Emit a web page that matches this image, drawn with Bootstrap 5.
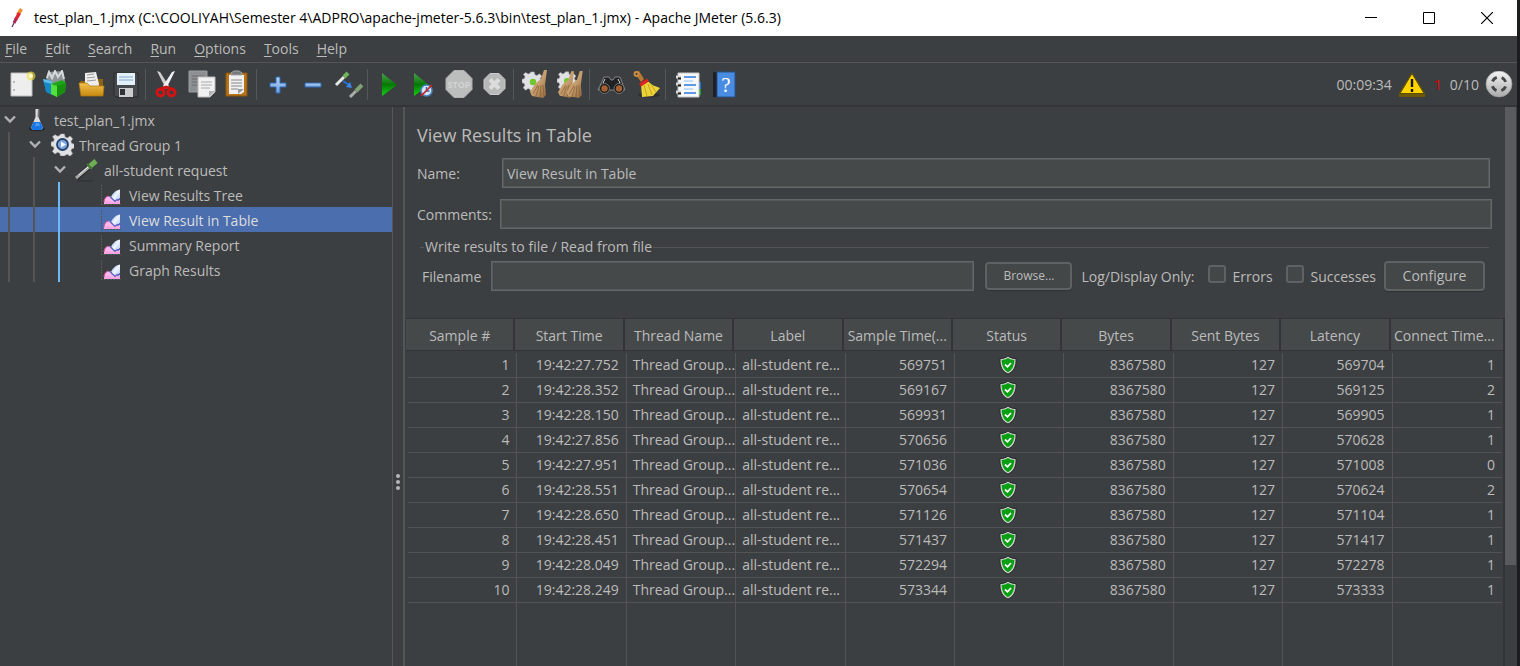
<!DOCTYPE html>
<html lang="en">
<head>
<meta charset="utf-8">
<meta name="viewport" content="width=device-width, initial-scale=1">
<title>Apache JMeter (5.6.3)</title>
<link href="https://cdn.jsdelivr.net/npm/bootstrap@5.3.0/dist/css/bootstrap.min.css" rel="stylesheet">
<style>
  body { font-family: "Open Sans", sans-serif; font-size: 14px; line-height: 20px; color: #bbb; background: #1b1c1e; overflow: hidden; }
  svg { display: block; flex: none; }
  .app { background: #3c3f41; margin-right: 3px; }
  .titlebar { height: 36px; background: #fff; color: #000; padding-left: 6px; }
  .win-btn { width: 58px; height: 36px; border: 0; background: none; padding: 0 22px; color: #000; }
  .menubar { height: 27px; border-bottom: 1px solid #555; padding-left: 5px; gap: 18px; }
  .menubar a { color: #bbb; text-decoration: none; }
  .menubar u { text-underline-offset: 2px; }
  .toolbar { height: 44px; border-bottom: 2px solid #323437; padding-left: 4px; }
  .tool { width: 35px; height: 34px; border: 0; background: none; padding: 3px; }
  .tool-sep { width: 6px; height: 31px; border-left: 1px solid #55585a; margin-left: 1px; margin-right: -1px; }
  .status { gap: 6px; padding: 2px 4px 0 0; }
  .count-err { color: #e80000; padding: 0 2px; }
  .tree { width: 392px; flex: none; }
  .tree-row { height: 25px; padding: 2px 0 0; border: 0; background: none; color: #bbb; width: 100%; text-align: left; }
  .tree-row.selected { background: #4b6eaf; color: #ddd; }
  .guide { width: 25px; height: 25px; margin-top: -2px; background: linear-gradient(#555, #555) 8px 0 / 2px 100% no-repeat; }
  .guide-on { background-image: linear-gradient(#6cb8fb, #6cb8fb); }
  .twisty { width: 24px; padding: 0 0 4px 4px; }
  .node-icon { width: 30px; padding-bottom: 2px; }
  .splitter { width: 13px; flex: none; border-left: 1px solid #555; border-right: 2px solid #555; gap: 2px; margin-right: 1px; padding-top: 190px; }
  .splitter i { width: 4px; height: 4px; border-radius: 50%; background: #b4b6b8; }
  .form-area { padding: 15px 13px 0 11px; }
  .panel-title { font-size: 18px; line-height: 26px; margin: 0 0 10px; font-weight: 400; color: #bbb; }
  .form-area label, .form-area .log-lbl { padding-top: 1px; }
  .field { height: 30px; min-width: 0; background: #45494a; color: #bbb; border: 1px solid #646667; box-shadow: inset 0 0 0 1px #55595a; padding: 0 4px; outline: 0; }
  .lbl-name { width: 85px; }
  .lbl-comments { width: 83px; }
  .name-row { padding-right: 2px; margin-bottom: 11px; }
  .file-box { margin: 8px 3px 0; padding: 0; }
  .file-box legend { font-size: 14px; line-height: 20px; gap: 1px; margin: 0; }
  .file-box legend::before, .file-box legend::after { content: ""; height: 1px; background: #555; width: 4px; }
  .file-box legend::after { flex: 1; }
  .file-row { padding: 4px 4px 0 2px; }
  .filename-lbl { width: 69px; }
  .push { height: 30px; border: 2px solid #5e6263; border-radius: 4px; background: #434748; color: #bbb; padding: 0; box-shadow: 0 1px 1px #2f3234; }
  .push-browse { width: 87px; height: 28px; font-size: 12px; margin: 0 9px 0 11px; }
  .push-config { width: 101px; }
  .gap-end { margin-right: 13px; }
  .tick { appearance: none; width: 18px; height: 18px; border: 2px solid #5e6263; border-radius: 3px; background: #434748; margin: 0 7px 4px 0; }
  .results-wrap { margin-top: 27px; padding: 0 1px 0 2px; border-top: 1px solid #323437; border-right: 2px solid #323437;
    background: linear-gradient(#323437, #323437) 0 31px / 100% 1px no-repeat, linear-gradient(#45494a, #45494a) 0 0 / 100% 31px no-repeat; }
  .results { width: 100%; height: 100%; table-layout: fixed; border-collapse: separate; border-spacing: 0; }
  .results th { height: 34px; padding: 0 6px 1px 0; font-weight: 400; text-align: center; white-space: nowrap;
    background: linear-gradient(#323437, #323437) right 2px top 0 / 2px 31px no-repeat; }
  .results th:last-child { background: none; }
  .results td { height: 25px; padding: 0 7px 1px 5px; border-right: 1px solid #515355; border-bottom: 1px solid #515355; white-space: nowrap; overflow: hidden; text-align: right; }
  .results td:last-child { border-right: 0; }
  .results td.txt { text-align: left; padding: 0 0 1px 6px; }
  .results td svg { margin: 0 auto; }
  .results .filler td { height: auto; border-bottom: 0; }
  .scroll-track { width: 12px; flex: none; }
  .scroll-thumb { height: 82%; background: #595b5d; width: 11px; }
</style>
</head>
<body class="vh-100">
<svg width="0" height="0" class="position-absolute" aria-hidden="true">
  <defs>
    <linearGradient id="gGreen" x1="0" y1="0" x2="0" y2="1"><stop offset="0" stop-color="#4aa04a"/><stop offset=".5" stop-color="#067806"/><stop offset="1" stop-color="#12d412"/></linearGradient>
    <linearGradient id="gGold" x1="0" y1="0" x2="0" y2="1"><stop offset="0" stop-color="#f0c050"/><stop offset="1" stop-color="#c88a10"/></linearGradient>
    <linearGradient id="gBlue" x1="0" y1="0" x2="0" y2="1"><stop offset="0" stop-color="#b8d4f4"/><stop offset="1" stop-color="#6c9fe0"/></linearGradient>
    <linearGradient id="gSilver" x1="0" y1="0" x2="0" y2="1"><stop offset="0" stop-color="#f4f4f4"/><stop offset="1" stop-color="#aaa"/></linearGradient>
    <linearGradient id="gBroom" x1="0" y1="0" x2="1" y2="1"><stop offset="0" stop-color="#b98a5c"/><stop offset=".5" stop-color="#c8a070"/><stop offset="1" stop-color="#8c6238"/></linearGradient>
    <linearGradient id="gPeak" x1="0" y1="0" x2="1" y2="1"><stop offset="0" stop-color="#6f9be4"/><stop offset=".5" stop-color="#f2f7ff"/><stop offset="1" stop-color="#a9c4f2"/></linearGradient>
    <symbol id="chevron" viewBox="0 0 12 12"><path d="M1 3.500L6 8.500l5-5" fill="none" stroke="#afb1b3" stroke-width="2.400"/></symbol>
    <symbol id="chart" viewBox="-1 0 22 22"><path d="M1.500 1v20M1 20.500h20" stroke="#55585a" stroke-dasharray="2 1"/><path d="M4 20c0-4 1-6 3-7.500h4l2 3 3 1 4-1V20z" fill="#fbb8ea"/><path d="M4 18c0-3 2-5.500 4-6" stroke="#d84f9c" fill="none"/><path d="M11 13c2-4 4-6.500 9-7.500V14l-2 2-2 1-3-1z" fill="url(#gPeak)"/><path d="M10 12.500l3 3 2 2 2-2 1 1 2-2" stroke="#5b5fc4" fill="none" stroke-width="1.200"/><path d="M4 19.500l3-3 3 1 4 1 6-1V20H4z" fill="#f7a4e2"/></symbol>
    <symbol id="gearshape" viewBox="0 0 24 24"><path d="M10 1h4l.7 3.200 2.300 1 3-2 2.600 2.700-1.800 2.900.9 2.200 3.300.8v3.800l-3.300.8-.9 2.300 1.800 2.800-2.700 2.700-2.900-1.900-2.200.9L14 24h-4l-.8-3-2.200-1-2.900 1.900-2.700-2.700 1.900-2.800-1-2.300-2.300-.6V9.500l2.500-.6 1-2.200-1.900-2.900L4.200 1.700 7 3.500l2.200-1z" fill="#dfe1e2" stroke="#a4a6a7" stroke-width=".6"/></symbol>
    <symbol id="shield" viewBox="0 0 18 20"><path d="M9 1c2.500 2 5 2.500 8 2.500C17.500 11 15 16.500 9 19 3 16.500.5 11 1 3.500 4 3.500 6.500 3 9 1z" fill="#c9cfc9" stroke="#262829"/><path d="M9 3c1.800 1.300 3.800 1.800 6.300 2C15.200 10.800 13 15 9 17.200 5 15 2.800 10.800 2.700 5 5.200 4.800 7.200 4.300 9 3z" fill="#08a012"/><path d="M6 9.500l2.500 2.300L12 8" fill="none" stroke="#fff" stroke-width="1.700"/></symbol>
    <symbol id="broom" viewBox="0 0 18 28"><path d="M14 0h3l-2 15 1 10-3 3-11-2-2-4 5-8 6-5z" fill="url(#gBroom)"/><path d="M3 24l5-9M6 26l3-10M10 27l1-12M14 26l-1-11" stroke="#8a5e32" stroke-width=".8"/></symbol>
  </defs>
</svg>

<div class="app d-flex flex-column h-100">
  <header class="titlebar d-flex align-items-center">
    <svg width="20" height="24" viewBox="0 0 20 24"><path d="M15.500 3l-4 6" stroke="#f0912a" stroke-width="3.500"/><path d="M13.500 7l-4 7" stroke="#d92638" stroke-width="3.500"/><path d="M10 13l-2 4" stroke="#a52a56" stroke-width="3"/><path d="M8 17l-2 4" stroke="#6c2a68" stroke-width="1.200"/></svg>
    <span class="ms-2 me-auto text-nowrap">test_plan_1.jmx (C:\COOLIYAH\Semester 4\ADPRO\apache-jmeter-5.6.3\bin\test_plan_1.jmx) - Apache JMeter (5.6.3)</span>
    <button class="win-btn" aria-label="Minimize"><svg width="12" height="12"><path d="M0 5.500h12" stroke="#000"/></svg></button>
    <button class="win-btn" aria-label="Maximize"><svg width="12" height="12"><path d="M.5.5h11v11H.5z" fill="none" stroke="#000"/></svg></button>
    <button class="win-btn" aria-label="Close"><svg width="12" height="12"><path d="M0 0l12 12M12 0L0 12" stroke="#000" stroke-width="1.200"/></svg></button>
  </header>

  <nav class="menubar d-flex align-items-center" aria-label="Menu">
    <a href="#"><u>F</u>ile</a><a href="#"><u>E</u>dit</a><a href="#"><u>S</u>earch</a><a href="#"><u>R</u>un</a><a href="#"><u>O</u>ptions</a><a href="#"><u>T</u>ools</a><a href="#"><u>H</u>elp</a>
  </nav>

  <div class="toolbar d-flex align-items-center" role="toolbar">
    <button class="tool" aria-label="New"><svg width="29" height="28" viewBox="0 0 29 28"><path d="M4 3h21v23H4z" fill="#eee" stroke="#bdbdbd"/><path d="M6 12h2M6 20h2" stroke="#888"/><circle cx="24" cy="6" r="4.500" fill="#f4e03a" opacity=".6"/><circle cx="24" cy="6" r="2" fill="#fffbd0"/></svg></button>
    <button class="tool" aria-label="Templates"><svg width="29" height="28" viewBox="0 0 29 28"><path d="M4 9L6 2l15-1 2 11-10 4z" fill="#8d9496"/><path d="M5 8l2-6 3 6 3-7 3 6 4-6 2 8" stroke="#d6dadb" fill="none" stroke-width="2"/><path d="M1 9l9 2v14l-6-3z" fill="#1687c8"/><path d="M1 9l9 2v3L2 12z" fill="#62bce8"/><path d="M9 14l11-4 4 3-1 9-8 5-6-3z" fill="#1ea61a"/><path d="M9 14l6 2v11l-6-3z" fill="#54e03c"/><path d="M15 16l9-3-1 8-8 6z" fill="#18900f"/></svg></button>
    <button class="tool" aria-label="Open"><svg width="29" height="28" viewBox="0 0 29 28"><path d="M3 11h7l2-2h14v16H5z" fill="#8c6410"/><path d="M8 3l11-1 3 12-1 6H8z" fill="#eee"/><path d="M10 5l7-1M10 8l8-1M10 11l9-1" stroke="#999"/><path d="M2 13h8l3 3h14l-1 10H4z" fill="url(#gGold)" stroke="#b07a10" stroke-width=".7"/></svg></button>
    <button class="tool" aria-label="Save"><svg width="29" height="28" viewBox="0 0 29 28"><path d="M2 3h24v24H4l-2-2z" fill="#45484c" stroke="#292b2d"/><path d="M5 3h18v12H5z" fill="#e2f0fa"/><path d="M7 7h14M7 10h14" stroke="#88aacc"/><path d="M7 18h14v9H7z" fill="#c9cbcc"/><path d="M8 19h5v6H8z" fill="#2f3235"/></svg></button>
    <span class="tool-sep"></span>
    <button class="tool" aria-label="Cut"><svg width="29" height="28" viewBox="0 0 29 28"><path d="M4 1l3 1 9 14-3 3z" fill="#cfcfcf"/><path d="M22 1l-3 1-9 14 3 3z" fill="#f2f2f2"/><circle cx="7.500" cy="22.500" r="3.500" fill="none" stroke="#d31313" stroke-width="3"/><circle cx="18.500" cy="22.500" r="3.500" fill="none" stroke="#d31313" stroke-width="3"/><path d="M8 19l5-2 5 2" stroke="#d31313" stroke-width="3" fill="none"/></svg></button>
    <button class="tool" aria-label="Copy"><svg width="29" height="28" viewBox="0 0 29 28"><path d="M1 1h18v21H1z" fill="#8d9092" stroke="#9da0a2"/><path d="M4 6h12M4 9h12M4 12h12M4 15h12" stroke="#6a6d6f"/><path d="M10 7h17v15l-5 5H10z" fill="#f1f1f1" stroke="#bbb"/><path d="M13 12h11M13 15h11M13 18h9" stroke="#aaa"/><path d="M27 21l-6 6v-6z" fill="#b4b4b4"/></svg></button>
    <button class="tool" aria-label="Paste"><svg width="29" height="28" viewBox="0 0 29 28"><path d="M3 3h21v23H3z" fill="#b87418" stroke="#8a540c"/><path d="M6 5h15v17l-3 2H6z" fill="#f1f1f1"/><path d="M8 10h11M8 13h11M8 16h11M8 19h7" stroke="#888"/><path d="M21 19l-6 5v-5z" fill="#999"/><path d="M8 5V3l3-2h5l3 2v2z" fill="#74797a" stroke="#a5a9aa"/></svg></button>
    <span class="tool-sep"></span>
    <button class="tool" aria-label="Expand all"><svg width="29" height="28" viewBox="0 0 29 28"><path d="M12 7h4v6h6v4h-6v6h-4v-6H6v-4h6z" fill="url(#gBlue)" stroke="#2f69b5"/></svg></button>
    <button class="tool" aria-label="Collapse all"><svg width="29" height="28" viewBox="0 0 29 28"><path d="M6 13h16v4H6z" fill="url(#gBlue)" stroke="#2f69b5"/></svg></button>
    <button class="tool" aria-label="Toggle"><svg width="29" height="28" viewBox="0 0 29 28"><path d="M2 15l8-8" stroke="#e8e8e4" stroke-width="3"/><path d="M10 7l4-4" stroke="#6eb458" stroke-width="4"/><path d="M9 11l6 4" stroke="#2472dc" stroke-width="2"/><path d="M18 18l-6-1 4-5z" fill="#3c86f0"/><path d="M16 27l6-6" stroke="#a9adaa" stroke-width="3"/><path d="M22 21l6-6" stroke="#7fa273" stroke-width="4"/></svg></button>
    <span class="tool-sep"></span>
    <button class="tool" aria-label="Start"><svg width="29" height="28" viewBox="0 0 29 28"><path d="M7 3l15 12L7 26z" fill="url(#gGreen)"/></svg></button>
    <button class="tool" aria-label="Start no pauses"><svg width="29" height="28" viewBox="0 0 29 28"><path d="M4 3l15 12L4 26z" fill="url(#gGreen)"/><circle cx="16.500" cy="20.500" r="5.500" fill="#d4e6fa" stroke="#4d83c0" stroke-width="1.500"/><path d="M16.500 17v4h3" stroke="#2f69b5" fill="none" stroke-width="1.500"/><path d="M11 26l11-11" stroke="#d02020" stroke-width="1.700"/></svg></button>
    <button class="tool" aria-label="Stop" disabled><svg width="29" height="28" viewBox="0 0 29 28"><path d="M9 .5h10l8 8v11l-8 8H9l-8-8v-11z" fill="#bcbdbd" stroke="#b0b2b2"/><text x="14" y="18" font-size="9" text-anchor="middle" fill="#d2d3d3" font-family="Open Sans, sans-serif" font-weight="700">STOP</text></svg></button>
    <button class="tool" aria-label="Shutdown" disabled><svg width="29" height="28" viewBox="0 0 29 28"><path d="M10 3.500h9l6 6v9l-6 6h-9l-6-6v-9z" fill="#b7b9b9" stroke="#c9caca"/><path d="M10 9.500l9 9M19 9.500l-9 9" stroke="#dcdcdc" stroke-width="4"/></svg></button>
    <span class="tool-sep"></span>
    <button class="tool" aria-label="Clear"><svg width="29" height="28" viewBox="0 0 29 28"><use href="#gearshape" x="1" y="1" width="21" height="21"/><circle cx="12" cy="12" r="3.200" fill="#6fc82c"/><use href="#broom" x="9" y="0" width="18" height="28"/></svg></button>
    <button class="tool" aria-label="Clear all"><svg width="29" height="28" viewBox="0 0 29 28"><use href="#gearshape" x="1" y="1" width="20" height="20"/><circle cx="11" cy="11" r="3" fill="#6fc82c"/><use href="#broom" x="2" y="1" width="17" height="27"/><use href="#broom" x="10" y="1" width="18" height="27"/></svg></button>
    <span class="tool-sep"></span>
    <button class="tool" aria-label="Search"><svg width="29" height="28" viewBox="0 0 29 28"><path d="M7 7h5l2 3h2l2-3h5l5 13H1z" fill="#202122" stroke="#96999a" stroke-width=".8"/><circle cx="7.500" cy="18.500" r="5" fill="#181818" stroke="#777"/><circle cx="22" cy="18.500" r="5" fill="#181818" stroke="#777"/><circle cx="7.500" cy="18.500" r="3.200" fill="#a75f34"/><circle cx="22" cy="18.500" r="3.200" fill="#a75f34"/><path d="M8 9l-2 4M21 9l2 4" stroke="#ddd"/></svg></button>
    <button class="tool" aria-label="Reset search"><svg width="29" height="28" viewBox="0 0 29 28"><ellipse cx="17" cy="25" rx="11" ry="2.500" fill="#2c2e30"/><path d="M2 2l5-1 5 8-3 3z" fill="#b87830"/><circle cx="4.500" cy="4" r="3" fill="#c88a44"/><circle cx="4.500" cy="4" r="1" fill="#3c3f41"/><path d="M15 10c4 5 8 6 13 8l-7 8-11 1-1-13z" fill="#ecd33a"/><path d="M12 15l3 11M16 14l4 11M18 13l6 9" stroke="#c3a51c"/><path d="M8 15l8-5" stroke="#d92222" stroke-width="3.500"/></svg></button>
    <span class="tool-sep"></span>
    <button class="tool" aria-label="Function helper"><svg width="29" height="28" viewBox="0 0 29 28"><path d="M22 12h6v7h-6z" fill="#2374e0"/><path d="M22 19h6v6h-6z" fill="#1fa01f"/><path d="M5 3h21v24H5z" fill="#f5f7f9" stroke="#c8c8c8"/><path d="M11 7h12M11 15h12M11 23h12" stroke="#2e7be0" stroke-width="1.600"/><path d="M11 11h9M11 19h9" stroke="#99c2f4"/><path d="M3 7h5M3 14h5M3 22h5" stroke="#d8d8d8" stroke-width="3"/><path d="M5 8.500h3M5 15.500h3M5 23.500h3" stroke="#171717" stroke-width="2"/></svg></button>
    <button class="tool" aria-label="Help"><svg width="29" height="28" viewBox="0 0 29 28"><path d="M5 2h6v25H5z" fill="#1c2024"/><path d="M9 2h18v25H9z" fill="#4a8ce2" stroke="#24518c"/><text x="18" y="22" font-size="21" text-anchor="middle" fill="#fff" font-family="Liberation Serif, serif">?</text></svg></button>

    <div class="status d-flex align-items-center ms-auto">
      <span>00:09:34</span>
      <svg width="28" height="28" viewBox="0 0 28 28"><path d="M1 22.500L14 1.500l13 21v3.500H1z" fill="#6b5906"/><path d="M14 2.500l12 20H2z" fill="#ffd400" stroke="#5e4a00"/><path d="M14 8v8M14 18v3" stroke="#171400" stroke-width="2.400"/></svg>
      <span class="count-err">1</span>
      <span>0/10</span>
      <svg width="28" height="28" viewBox="0 0 28 28"><circle cx="14" cy="13" r="13" fill="url(#gSilver)" stroke="#9b9b9b" stroke-width=".7"/><circle cx="14" cy="13" r="7" fill="none" stroke="#444748" stroke-width="3" stroke-dasharray="6 5" stroke-dashoffset="-2.500"/></svg>
    </div>
  </div>

  <main class="d-flex flex-grow-1 overflow-hidden">
    <div class="tree" role="tree" aria-label="Test plan">
      <button class="tree-row d-flex align-items-center" role="treeitem"><span class="twisty"><svg width="12" height="12"><use href="#chevron"/></svg></span><span class="node-icon"><svg width="26" height="24" viewBox="0 0 26 24"><ellipse cx="13" cy="21" rx="8" ry="2" fill="#232527"/><path d="M11.500 1h3v8l4.500 11-2 2H9l-2-2 4.500-11z" fill="#d9dcde"/><path d="M14 1h1.500v8h-2z" fill="#777"/><path d="M9.500 14h7l2.500 6-2 2H9l-2-2z" fill="#1876e4"/><path d="M12 15h3l1 3h-5z" fill="#4a98f2"/></svg></span>test_plan_1.jmx</button>
      <button class="tree-row d-flex align-items-center" role="treeitem"><span class="guide"></span><span class="twisty"><svg width="12" height="12"><use href="#chevron"/></svg></span><span class="node-icon"><svg width="26" height="24" viewBox="0 0 26 24"><use href="#gearshape" x="2" y="0" width="23" height="23"/><circle cx="13.500" cy="11.500" r="5.500" fill="#7fa6dc" stroke="#24406c" stroke-width="1.800"/><path d="M12 8.500l5 3-5 3z" fill="#f4f8ff"/></svg></span>Thread Group 1</button>
      <button class="tree-row d-flex align-items-center" role="treeitem"><span class="guide"></span><span class="guide"></span><span class="twisty"><svg width="12" height="12"><use href="#chevron"/></svg></span><span class="node-icon"><svg width="26" height="24" viewBox="0 0 26 24"><path d="M3 20l12-11" stroke="#222" stroke-width="4.500"/><path d="M2 20l13-11" stroke="#a5a8a6" stroke-width="3"/><path d="M5 17l9-8" stroke="#eee"/><path d="M15 9l7-6" stroke="#6eae55" stroke-width="5"/><path d="M13 6l5 5" stroke="#3d7a32" stroke-width="2"/><path d="M3 23h16" stroke="#2d3032"/></svg></span>all-student request</button>
      <button class="tree-row d-flex align-items-center" role="treeitem"><span class="guide"></span><span class="guide"></span><span class="guide guide-on"></span><span class="twisty"></span><span class="node-icon"><svg width="22" height="22"><use href="#chart"/></svg></span>View Results Tree</button>
      <button class="tree-row selected d-flex align-items-center" role="treeitem" aria-selected="true"><span class="guide"></span><span class="guide"></span><span class="guide guide-on"></span><span class="twisty"></span><span class="node-icon"><svg width="22" height="22"><use href="#chart"/></svg></span>View Result in Table</button>
      <button class="tree-row d-flex align-items-center" role="treeitem"><span class="guide"></span><span class="guide"></span><span class="guide guide-on"></span><span class="twisty"></span><span class="node-icon"><svg width="22" height="22"><use href="#chart"/></svg></span>Summary Report</button>
      <button class="tree-row d-flex align-items-center" role="treeitem"><span class="guide"></span><span class="guide"></span><span class="guide guide-on"></span><span class="twisty"></span><span class="node-icon"><svg width="22" height="22"><use href="#chart"/></svg></span>Graph Results</button>
    </div>

    <div class="splitter d-flex flex-column align-items-center justify-content-center"><i></i><i></i><i></i></div>

    <section class="d-flex flex-column flex-grow-1 overflow-hidden">
      <div class="form-area">
        <h1 class="panel-title">View Results in Table</h1>
        <div class="name-row d-flex align-items-center"><label class="lbl-name" for="name">Name:</label><input class="field flex-grow-1" id="name" type="text" value="View Result in Table"></div>
        <div class="d-flex align-items-center"><label class="lbl-comments" for="comments">Comments:</label><input class="field flex-grow-1" id="comments" type="text"></div>
        <fieldset class="file-box">
          <legend class="d-flex align-items-center">Write results to file / Read from file</legend>
          <div class="file-row d-flex align-items-center text-nowrap">
            <label class="filename-lbl" for="filename">Filename</label>
            <input class="field flex-grow-1" id="filename" type="text">
            <button class="push push-browse">Browse...</button>
            <span class="log-lbl gap-end">Log/Display Only:</span>
            <input class="tick" type="checkbox" id="errors"><label class="gap-end" for="errors">Errors</label>
            <input class="tick" type="checkbox" id="successes"><label class="me-2" for="successes">Successes</label>
            <button class="push push-config">Configure</button>
          </div>
        </fieldset>
      </div>
      <div class="results-wrap flex-grow-1">
        <table class="results">
          <thead><tr><th>Sample #</th><th>Start Time</th><th>Thread Name</th><th>Label</th><th>Sample Time(...</th><th>Status</th><th>Bytes</th><th>Sent Bytes</th><th>Latency</th><th>Connect Time...</th></tr></thead>
          <tbody id="rows"></tbody>
        </table>
      </div>
    </section>
    <div class="scroll-track"><div class="scroll-thumb"></div></div>
  </main>
</div>
<script src="https://cdn.jsdelivr.net/npm/bootstrap@5.3.0/dist/js/bootstrap.bundle.min.js"></script>
<script>
  // start time, sample time, latency, connect time
  const samples = [
    ["27.752", 569751, 569704, 1], ["28.352", 569167, 569125, 2], ["28.150", 569931, 569905, 1],
    ["27.856", 570656, 570628, 1], ["27.951", 571036, 571008, 0], ["28.551", 570654, 570624, 2],
    ["28.650", 571126, 571104, 1], ["28.451", 571437, 571417, 1], ["28.049", 572294, 572278, 1],
    ["28.249", 573344, 573333, 1]
  ];
  const icon = '<svg width="18" height="20" role="img" aria-label="Success"><use href="#shield"/></svg>';
  document.getElementById("rows").innerHTML = samples.map(([start, time, latency, connect], i) =>
    `<tr><td>${i + 1}</td><td>19:42:${start}</td><td class="txt">Thread Group...</td><td class="txt">all-student re...</td><td>${time}</td><td>${icon}</td><td>8367580</td><td>127</td><td>${latency}</td><td>${connect}</td></tr>`
  ).join("") + `<tr class="filler">${"<td></td>".repeat(10)}</tr>`;
</script>
</body>
</html>
